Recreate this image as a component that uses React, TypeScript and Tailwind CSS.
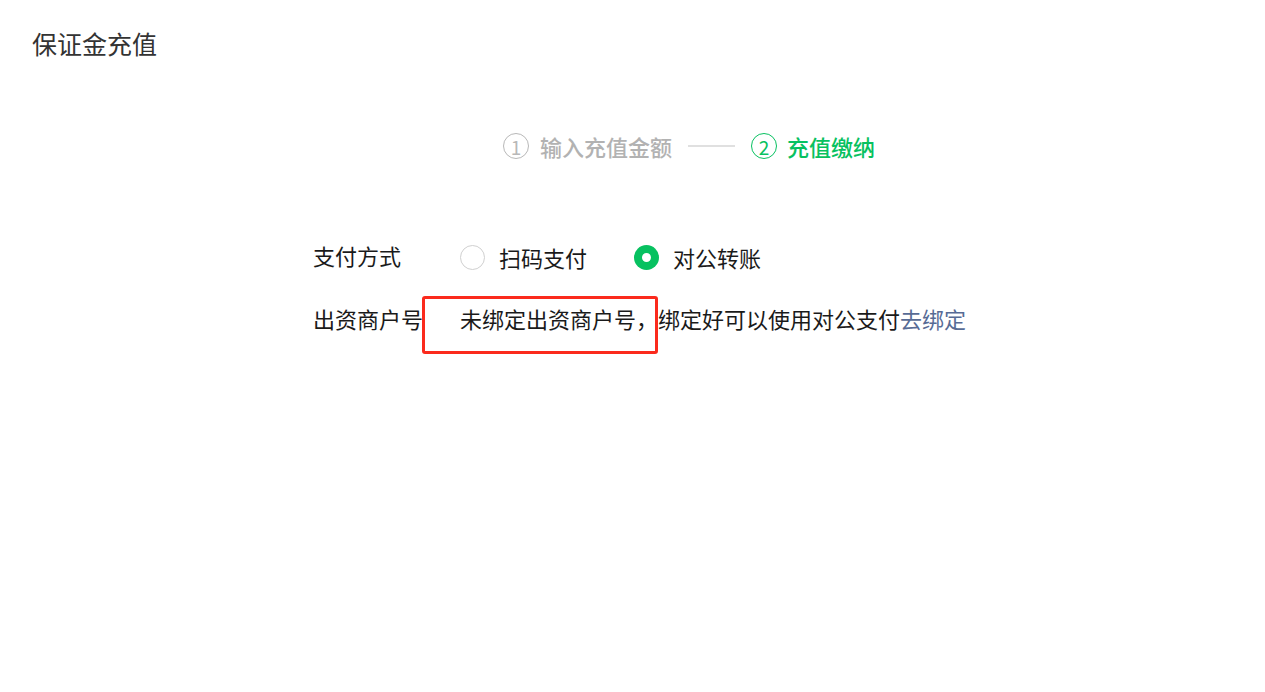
import React from 'react';

const font = { fontFamily: '"Noto Sans CJK SC", "Noto Sans", sans-serif' };

function StepCircle({ n, active }: { n: number; active?: boolean }) {
  return (
    <span
      className={`flex h-[26px] w-[26px] items-center justify-center rounded-full border-[1.5px] text-[19px] font-normal leading-none ${
        active ? 'border-[#07c160] text-[#07c160]' : 'border-[#b8b8b8] text-[#b8b8b8]'
      }`}
    >
      {n}
    </span>
  );
}

function Radio({ checked, label }: { checked?: boolean; label: string }) {
  return (
    <label className="flex items-center gap-[14px]">
      {checked ? (
        <span className="flex h-[25px] w-[25px] items-center justify-center rounded-full bg-[#07c160]">
          <span className="h-[9px] w-[9px] rounded-full bg-white" />
        </span>
      ) : (
        <span className="h-[25px] w-[25px] rounded-full border border-[#d0d0d0] bg-white" />
      )}
      <span>{label}</span>
    </label>
  );
}

export default function App() {
  return (
    <div className="min-h-[692px] w-full bg-white text-[#1a1a1a]" style={font}>
      <div className="px-8 pt-[26px]">
        <h1 className="text-[25px] leading-[34px] text-[#333]">保证金充值</h1>
      </div>

      <div className="mt-[70px] flex items-center pl-[503px] text-[22px] font-medium leading-[32px]">
        <div className="flex items-center gap-[11px] text-[#b2b2b2]">
          <StepCircle n={1} />
          <span>输入充值金额</span>
        </div>
        <div className="mx-[16px] h-[2px] w-[47px] bg-[#e0e0e0]" />
        <div className="flex items-center gap-[10px] text-[#07c160]">
          <StepCircle n={2} active />
          <span>充值缴纳</span>
        </div>
      </div>

      <div className="mt-[79px] pl-[313px] text-[22px] leading-[32px]">
        <div className="flex items-center">
          <div className="w-[147px] -translate-y-[2px]">支付方式</div>
          <div className="flex items-center gap-[47px]">
            <Radio label="扫码支付" />
            <Radio checked label="对公转账" />
          </div>
        </div>

        <div className="relative mt-[29px] flex items-center">
          <div className="w-[147px]">出资商户号</div>
          <div>
            未绑定出资商户号，绑定好可以使用对公支付
            <span className="text-[#576b95]">去绑定</span>
          </div>
          <div className="pointer-events-none absolute left-[109px] top-[-6px] h-[58px] w-[236px] rounded-[3px] border-[3px] border-[#fb2a1d]" />
        </div>
      </div>
    </div>
  );
}
